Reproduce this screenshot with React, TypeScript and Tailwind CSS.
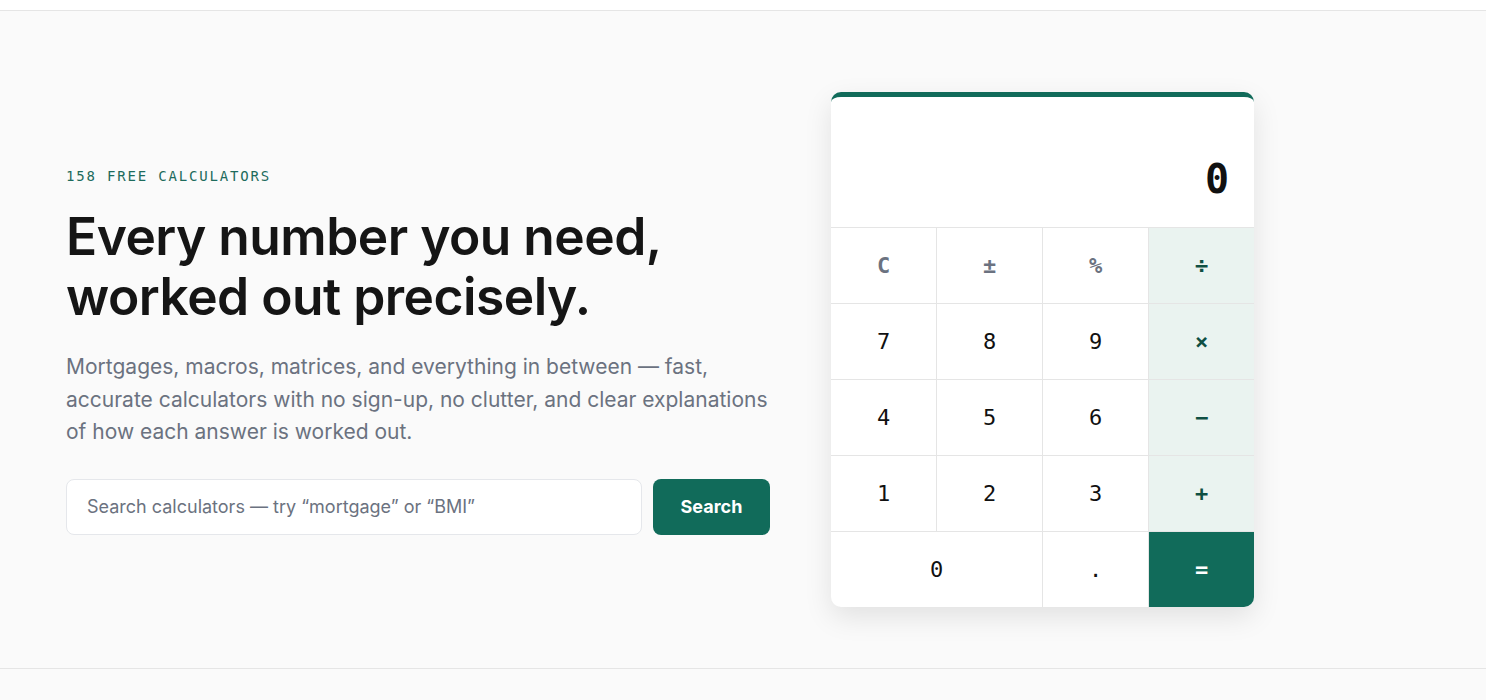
const mono = { fontFamily: '"DejaVu Sans Mono", "Liberation Mono", monospace' };

type Key = { label: string; kind: 'fn' | 'num' | 'op' | 'eq'; wide?: boolean };

const keys: Key[] = [
  { label: 'C', kind: 'fn' },
  { label: '±', kind: 'fn' },
  { label: '%', kind: 'fn' },
  { label: '÷', kind: 'op' },
  { label: '7', kind: 'num' },
  { label: '8', kind: 'num' },
  { label: '9', kind: 'num' },
  { label: '×', kind: 'op' },
  { label: '4', kind: 'num' },
  { label: '5', kind: 'num' },
  { label: '6', kind: 'num' },
  { label: '−', kind: 'op' },
  { label: '1', kind: 'num' },
  { label: '2', kind: 'num' },
  { label: '3', kind: 'num' },
  { label: '+', kind: 'op' },
  { label: '0', kind: 'num', wide: true },
  { label: '.', kind: 'num' },
  { label: '=', kind: 'eq' },
];

const keyStyles: Record<Key['kind'], string> = {
  fn: 'bg-white text-[#6b7280] font-semibold',
  num: 'bg-white text-[#111111] font-medium',
  op: 'bg-[#eaf3f0] text-[#0f4f43] font-semibold',
  eq: 'bg-[#116b5a] text-white font-semibold',
};

function Calculator() {
  return (
    <div className="w-[423px] shrink-0 overflow-hidden rounded-[10px] border-t-[5px] border-[#116b5a] bg-white shadow-[0_10px_28px_rgba(0,0,0,0.10)]">
      {/* Display */}
      <div className="flex h-[130px] items-end justify-end px-[25px] pb-[28px]">
        <span className="text-[40px] font-bold leading-none text-[#111111]" style={mono}>
          0
        </span>
      </div>

      {/* Keypad */}
      <div className="grid grid-cols-4 gap-px bg-[#e5e5e5] pt-px">
        {keys.map((k) => (
          <button
            key={k.label}
            className={`flex h-[75px] items-center justify-center text-[22px] ${keyStyles[k.kind]} ${
              k.wide ? 'col-span-2' : ''
            }`}
            style={mono}
          >
            {k.label}
          </button>
        ))}
      </div>
    </div>
  );
}

export default function App() {
  return (
    <div className="min-h-[700px] bg-[#fafafa]" style={{ fontFamily: 'Inter, "Noto Sans", sans-serif' }}>
      <div className="h-[11px] border-b border-[#e5e5e5] bg-white" />

      <main className="border-b border-[#e5e5e5]">
        <section className="flex items-start gap-[61px] pb-[61px] pl-[66px] pt-[81px]">
          {/* Text Content */}
          <div className="w-[704px] shrink-0 pt-[74px]">
            <p className="text-[14px] font-medium uppercase leading-[20px] tracking-[0.13em] text-[#1d6b5c]" style={mono}>
              158 free calculators
            </p>
            <h1 className="mt-[20px] text-[51.5px] font-semibold leading-[60px] tracking-[-0.01em] text-[#151515]">
              Every number you need,
              <br />
              worked out precisely.
            </h1>
            <p className="mt-[25px] w-[712px] text-[21px] leading-[32.5px] text-[#6b7280]">
              Mortgages, macros, matrices, and everything in between — fast, accurate calculators with no sign-up, no
              clutter, and clear explanations of how each answer is worked out.
            </p>

            <div className="mt-[30px] flex gap-[11px]">
              <input
                className="h-[56px] w-[576px] rounded-lg border border-[#e5e7eb] bg-white px-[20px] text-[18px] text-[#111111] outline-none placeholder:text-[#6b7280]"
                placeholder="Search calculators — try “mortgage” or “BMI”"
              />
              <button className="h-[56px] w-[117px] rounded-lg bg-[#116b5a] text-[18px] font-bold text-white">
                Search
              </button>
            </div>
          </div>

          {/* Calculator */}
          <Calculator />
        </section>
      </main>
    </div>
  );
}
